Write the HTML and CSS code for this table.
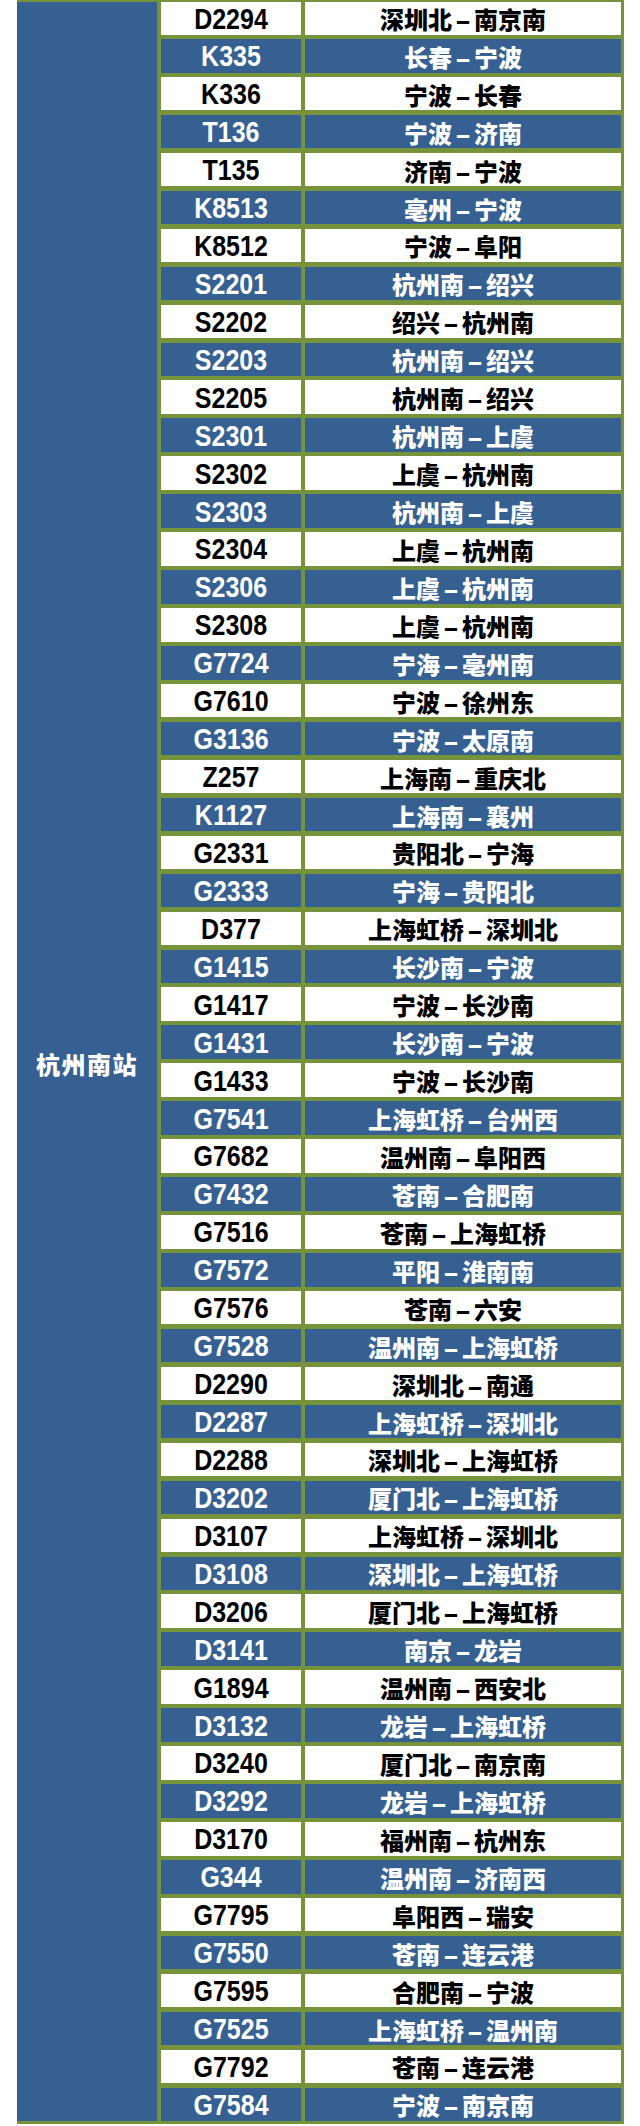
FILE: index.html
```html
<!DOCTYPE html>
<html lang="zh-CN">
<head>
<meta charset="utf-8">
<title>杭州南站 车次表</title>
<link rel="stylesheet" href="styles.css">
</head>
<body>
<div class="table">
  <div class="station"><span>杭州南站</span></div>
  <div class="num w"><span>D2294</span></div><div class="route w"><span>深圳北<i>-</i>南京南</span></div>
  <div class="num b"><span>K335</span></div><div class="route b"><span>长春<i>-</i>宁波</span></div>
  <div class="num w"><span>K336</span></div><div class="route w"><span>宁波<i>-</i>长春</span></div>
  <div class="num b"><span>T136</span></div><div class="route b"><span>宁波<i>-</i>济南</span></div>
  <div class="num w"><span>T135</span></div><div class="route w"><span>济南<i>-</i>宁波</span></div>
  <div class="num b"><span>K8513</span></div><div class="route b"><span>亳州<i>-</i>宁波</span></div>
  <div class="num w"><span>K8512</span></div><div class="route w"><span>宁波<i>-</i>阜阳</span></div>
  <div class="num b"><span>S2201</span></div><div class="route b"><span>杭州南<i>-</i>绍兴</span></div>
  <div class="num w"><span>S2202</span></div><div class="route w"><span>绍兴<i>-</i>杭州南</span></div>
  <div class="num b"><span>S2203</span></div><div class="route b"><span>杭州南<i>-</i>绍兴</span></div>
  <div class="num w"><span>S2205</span></div><div class="route w"><span>杭州南<i>-</i>绍兴</span></div>
  <div class="num b"><span>S2301</span></div><div class="route b"><span>杭州南<i>-</i>上虞</span></div>
  <div class="num w"><span>S2302</span></div><div class="route w"><span>上虞<i>-</i>杭州南</span></div>
  <div class="num b"><span>S2303</span></div><div class="route b"><span>杭州南<i>-</i>上虞</span></div>
  <div class="num w"><span>S2304</span></div><div class="route w"><span>上虞<i>-</i>杭州南</span></div>
  <div class="num b"><span>S2306</span></div><div class="route b"><span>上虞<i>-</i>杭州南</span></div>
  <div class="num w"><span>S2308</span></div><div class="route w"><span>上虞<i>-</i>杭州南</span></div>
  <div class="num b"><span>G7724</span></div><div class="route b"><span>宁海<i>-</i>亳州南</span></div>
  <div class="num w"><span>G7610</span></div><div class="route w"><span>宁波<i>-</i>徐州东</span></div>
  <div class="num b"><span>G3136</span></div><div class="route b"><span>宁波<i>-</i>太原南</span></div>
  <div class="num w"><span>Z257</span></div><div class="route w"><span>上海南<i>-</i>重庆北</span></div>
  <div class="num b"><span>K1127</span></div><div class="route b"><span>上海南<i>-</i>襄州</span></div>
  <div class="num w"><span>G2331</span></div><div class="route w"><span>贵阳北<i>-</i>宁海</span></div>
  <div class="num b"><span>G2333</span></div><div class="route b"><span>宁海<i>-</i>贵阳北</span></div>
  <div class="num w"><span>D377</span></div><div class="route w"><span>上海虹桥<i>-</i>深圳北</span></div>
  <div class="num b"><span>G1415</span></div><div class="route b"><span>长沙南<i>-</i>宁波</span></div>
  <div class="num w"><span>G1417</span></div><div class="route w"><span>宁波<i>-</i>长沙南</span></div>
  <div class="num b"><span>G1431</span></div><div class="route b"><span>长沙南<i>-</i>宁波</span></div>
  <div class="num w"><span>G1433</span></div><div class="route w"><span>宁波<i>-</i>长沙南</span></div>
  <div class="num b"><span>G7541</span></div><div class="route b"><span>上海虹桥<i>-</i>台州西</span></div>
  <div class="num w"><span>G7682</span></div><div class="route w"><span>温州南<i>-</i>阜阳西</span></div>
  <div class="num b"><span>G7432</span></div><div class="route b"><span>苍南<i>-</i>合肥南</span></div>
  <div class="num w"><span>G7516</span></div><div class="route w"><span>苍南<i>-</i>上海虹桥</span></div>
  <div class="num b"><span>G7572</span></div><div class="route b"><span>平阳<i>-</i>淮南南</span></div>
  <div class="num w"><span>G7576</span></div><div class="route w"><span>苍南<i>-</i>六安</span></div>
  <div class="num b"><span>G7528</span></div><div class="route b"><span>温州南<i>-</i>上海虹桥</span></div>
  <div class="num w"><span>D2290</span></div><div class="route w"><span>深圳北<i>-</i>南通</span></div>
  <div class="num b"><span>D2287</span></div><div class="route b"><span>上海虹桥<i>-</i>深圳北</span></div>
  <div class="num w"><span>D2288</span></div><div class="route w"><span>深圳北<i>-</i>上海虹桥</span></div>
  <div class="num b"><span>D3202</span></div><div class="route b"><span>厦门北<i>-</i>上海虹桥</span></div>
  <div class="num w"><span>D3107</span></div><div class="route w"><span>上海虹桥<i>-</i>深圳北</span></div>
  <div class="num b"><span>D3108</span></div><div class="route b"><span>深圳北<i>-</i>上海虹桥</span></div>
  <div class="num w"><span>D3206</span></div><div class="route w"><span>厦门北<i>-</i>上海虹桥</span></div>
  <div class="num b"><span>D3141</span></div><div class="route b"><span>南京<i>-</i>龙岩</span></div>
  <div class="num w"><span>G1894</span></div><div class="route w"><span>温州南<i>-</i>西安北</span></div>
  <div class="num b"><span>D3132</span></div><div class="route b"><span>龙岩<i>-</i>上海虹桥</span></div>
  <div class="num w"><span>D3240</span></div><div class="route w"><span>厦门北<i>-</i>南京南</span></div>
  <div class="num b"><span>D3292</span></div><div class="route b"><span>龙岩<i>-</i>上海虹桥</span></div>
  <div class="num w"><span>D3170</span></div><div class="route w"><span>福州南<i>-</i>杭州东</span></div>
  <div class="num b"><span>G344</span></div><div class="route b"><span>温州南<i>-</i>济南西</span></div>
  <div class="num w"><span>G7795</span></div><div class="route w"><span>阜阳西<i>-</i>瑞安</span></div>
  <div class="num b"><span>G7550</span></div><div class="route b"><span>苍南<i>-</i>连云港</span></div>
  <div class="num w"><span>G7595</span></div><div class="route w"><span>合肥南<i>-</i>宁波</span></div>
  <div class="num b"><span>G7525</span></div><div class="route b"><span>上海虹桥<i>-</i>温州南</span></div>
  <div class="num w"><span>G7792</span></div><div class="route w"><span>苍南<i>-</i>连云港</span></div>
  <div class="num b"><span>G7584</span></div><div class="route b"><span>宁波<i>-</i>南京南</span></div>
</div>
</body>
</html>
```

FILE: styles.css
```css
html, body {
  margin: 0;
  padding: 0;
  background: #ffffff;
}

.table {
  display: grid;
  width: max-content;
  margin-left: 17px;
  grid-template-columns: 140px 140px 316px;
  grid-template-rows: 32.6px repeat(55, 33.5px);
  column-gap: 4px;
  row-gap: 4.45px;
  padding: 2px 3px 3px 0;
  background: #76933c;
}

.station {
  grid-column: 1;
  grid-row: 1 / -1;
  background: #366092;
  color: #ffffff;
  display: flex;
  align-items: center;
  justify-content: center;
  font-family: "Noto Sans CJK SC", "Noto Sans", sans-serif;
  font-weight: 900;
  font-size: 24px;
  letter-spacing: 1.5px;
  padding-top: 4px;
}

.num,
.route {
  display: flex;
  align-items: center;
  justify-content: center;
  line-height: 1;
}

.num {
  grid-column: 2;
  font-family: "Liberation Sans", Arial, sans-serif;
  font-weight: 700;
  font-size: 25px;
}

.num span {
  display: inline-block;
  transform: translateY(1px) scaleY(1.15);
}

.route {
  grid-column: 3;
  font-family: "Noto Sans CJK SC", "Noto Sans", sans-serif;
  font-weight: 900;
  font-size: 24px;
}

.route span {
  display: inline-block;
  transform: translateY(1px);
}

.route i {
  display: inline-block;
  font-style: normal;
  width: 22px;
  text-align: center;
  transform: scaleX(1.8);
}

.w {
  background: #ffffff;
  color: #000000;
}

.b {
  background: #366092;
  color: #ffffff;
}
```
